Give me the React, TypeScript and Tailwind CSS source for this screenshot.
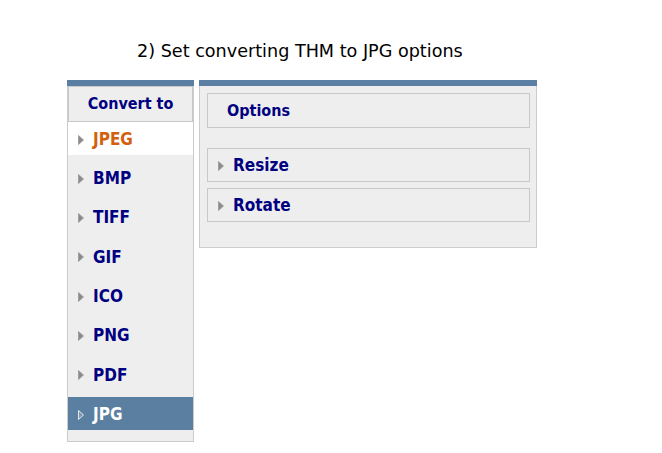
import React from 'react';

const formats = ['JPEG', 'BMP', 'TIFF', 'GIF', 'ICO', 'PNG', 'PDF', 'JPG'];

const Arrow = ({ white }: { white?: boolean }) => (
  <svg width="6" height="10" viewBox="0 0 6 10" className="shrink-0">
    <path d="M0.5 0.5 L5.5 5 L0.5 9.5 Z" fill={white ? '#7a97b5' : '#8a8a8a'} stroke={white ? '#e8e8e8' : '#a0a0a0'} strokeWidth="1" />
  </svg>
);

const App = () => {
  return (
    <div className="w-[662px] h-[453px] bg-white font-['DejaVu_Sans',Verdana,sans-serif]">
      <div className="pt-[39px] pl-[137px] text-[17.6px] leading-[24px] text-black">
        2) Set converting THM to JPG options
      </div>

      <div className="flex items-start gap-[5px] pl-[67px] pt-[17px] font-['DejaVu_Sans_Condensed','DejaVu_Sans',sans-serif]">
        {/* left: convert to */}
        <div className="w-[127px] border-x border-b border-[#cccccc] bg-[#eeeeee] pb-[11px]">
          <div className="h-[6px] bg-[#5b7fa3] -mx-px" />
          <div className="h-[36px] border border-[#c8c8c8] flex items-center justify-center text-[16px] font-bold text-[#000080]">
            Convert to
          </div>
          <div className="flex flex-col gap-[6.3px]">
            {formats.map((f, i) => {
              const first = i === 0;
              const last = i === formats.length - 1;
              return (
                <div
                  key={f}
                  className={
                    'h-[33px] flex items-center gap-[9px] pl-[10px] pt-[2px] text-[17px] font-bold ' +
                    (first ? 'bg-white text-[#d2600e]' : last ? 'bg-[#5a7fa1] text-white' : 'text-[#000080]')
                  }
                >
                  <Arrow white={last} />
                  <span>{f}</span>
                </div>
              );
            })}
          </div>
        </div>

        {/* right: options */}
        <div className="w-[338px] h-[168px] border-x border-b border-[#cccccc] bg-[#eeeeee]">
          <div className="h-[6px] bg-[#5b7fa3] -mx-px" />
          <div className="pl-[7px] pr-[6px] pt-[7px]">
            <div className="h-[35px] border border-[#c8c8c8] flex items-center pl-[19px] text-[16px] font-bold text-[#000080]">
              Options
            </div>
            <div className="mt-[20px] flex flex-col gap-[6px]">
              {['Resize', 'Rotate'].map((t) => (
                <div key={t} className="h-[34px] border border-[#c8c8c8] flex items-center gap-[9px] pl-[10px] pt-[1px] text-[17px] font-bold text-[#000080]">
                  <Arrow />
                  <span>{t}</span>
                </div>
              ))}
            </div>
          </div>
        </div>
      </div>
    </div>
  );
};

export default App;
